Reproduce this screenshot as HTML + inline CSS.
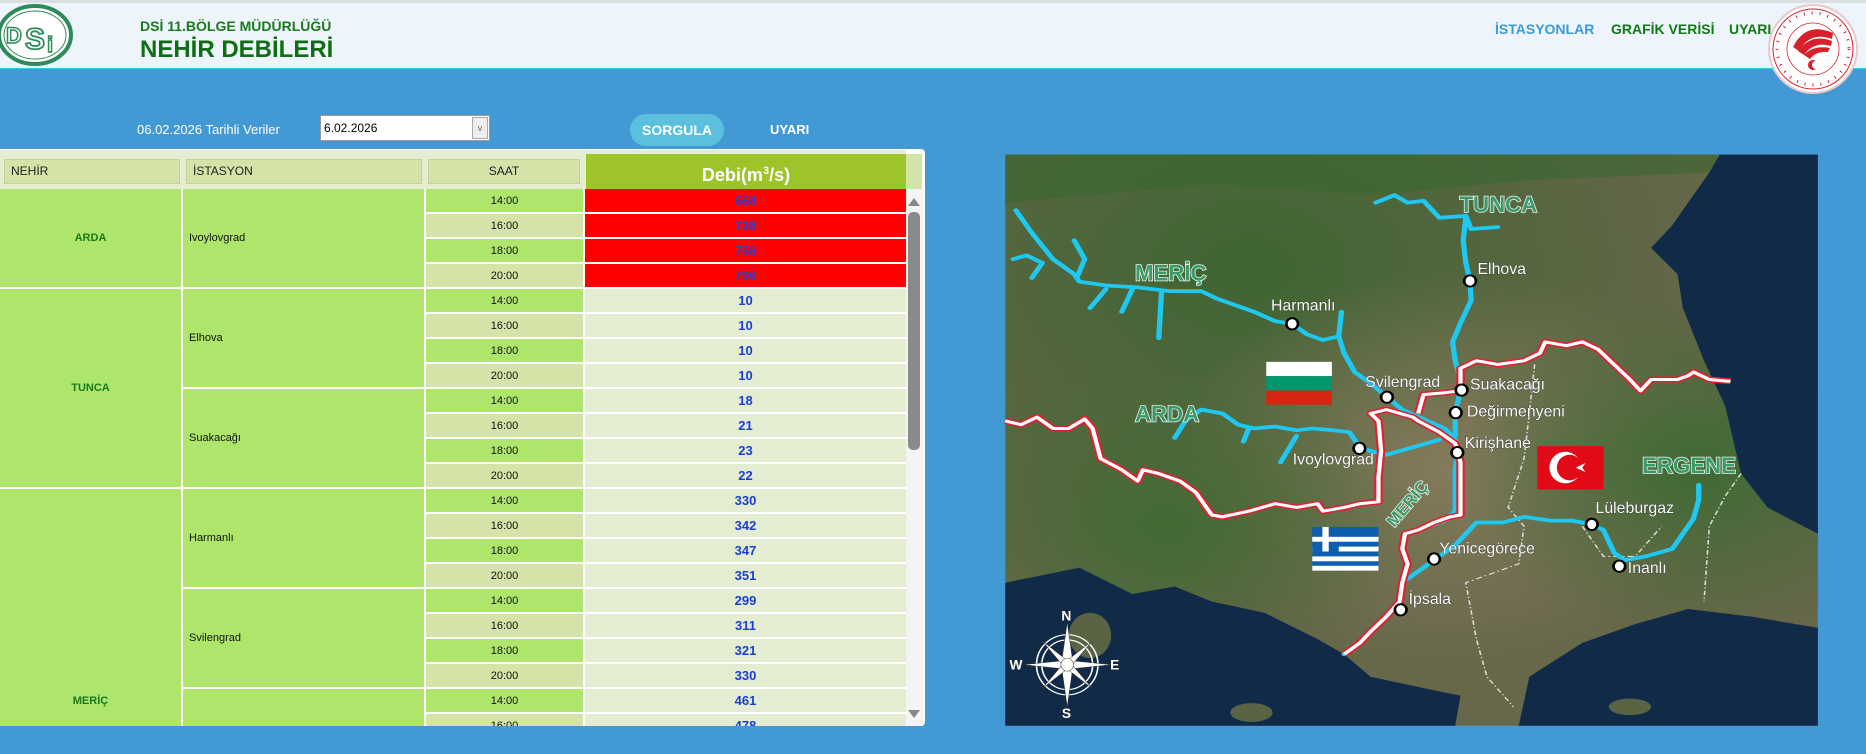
<!DOCTYPE html>
<html><head><meta charset="utf-8"><style>
*{margin:0;padding:0;box-sizing:border-box}
html,body{width:1866px;height:754px;overflow:hidden}
body{background:#4399d4;font-family:"Liberation Sans",sans-serif;position:relative}
.hdr{position:absolute;left:0;top:0;width:1866px;height:69px;background:#edf4fb;border-top:3px solid #dcdfe2;border-bottom:1px solid #3cc8e0}
.abs{position:absolute}
.t1{left:140px;top:18px;font-size:14px;font-weight:bold;color:#1a7a1a}
.t2{left:140px;top:36px;font-size:24px;font-weight:bold;color:#0f6e14}
.nav{top:21px;font-family:"Liberation Sans Narrow","Liberation Sans",sans-serif;font-size:14px;font-weight:bold}
.panel{left:0;top:149px;width:925px;height:577px;background:#fff;border-radius:0 4px 4px 0}
.hc{position:absolute;top:159px;height:25px;background:#d4e3a8;border:1px solid #c4d398;font-size:12px;line-height:23px;color:#222;padding-left:6px}
.grid{position:absolute;left:0;top:189px;width:906px;height:537px;overflow:hidden}
table{border-collapse:separate;border-spacing:0;table-layout:fixed;width:906px;font-family:"Liberation Sans Narrow","Liberation Sans",sans-serif}
td{height:25px;border-right:2px solid #fff;border-bottom:2px solid #fff;font-size:11px;padding:0}
td.n{background:#aee66c;color:#1a7a1a;font-weight:bold;text-align:center}
td.s{background:#aee66c;color:#111;padding-left:6px}
td.a{background:#aee66c;text-align:center;color:#111}
td.b{background:#d4e3a8;text-align:center;color:#111}
td.d{background:#e4edd2;text-align:center;color:#1a3fd0;font-weight:bold;font-size:13px;border-right:0}
td.r{background:#ff0000;text-align:center;color:#2a3fd0;font-weight:bold;font-size:13px;border-right:0}
</style></head><body>
<div class="hdr"></div>
<svg class="abs" style="left:0;top:3px" width="80" height="66" viewBox="0 3 80 66">
<ellipse cx="35" cy="35" rx="36" ry="29" fill="#fff" stroke="#2f8a5a" stroke-width="4"/>
<ellipse cx="35" cy="35" rx="31" ry="24" fill="none" stroke="#2f8a5a" stroke-width="1"/>
<text x="6" y="43" font-family="Liberation Sans" font-weight="bold" font-size="22" fill="#fff" stroke="#2f8a5a" stroke-width="1.5">D</text>
<text x="25" y="49" font-family="Liberation Sans" font-weight="bold" font-size="30" fill="#fff" stroke="#2f8a5a" stroke-width="1.8">S</text>
<text x="47" y="52" font-family="Liberation Sans" font-weight="bold" font-size="22" fill="#fff" stroke="#2f8a5a" stroke-width="1.5">i</text>
</svg>
<div class="abs t1">DSİ 11.BÖLGE MÜDÜRLÜĞÜ</div>
<div class="abs t2">NEHİR DEBİLERİ</div>
<div class="abs nav" style="left:1495px;color:#3a9ad9">İSTASYONLAR</div>
<div class="abs nav" style="left:1611px;color:#127a12">GRAFİK VERİSİ</div>
<div class="abs nav" style="left:1729px;color:#127a12">UYARI</div>
<svg class="abs" style="left:1766px;top:3px" width="94" height="92" viewBox="0 0 94 92">
<circle cx="47" cy="46" r="44" fill="#fff" stroke="#e8c8cc" stroke-width="2"/>
<circle cx="47" cy="46" r="40" fill="none" stroke="#d8202a" stroke-width="1"/>
<circle cx="47" cy="46" r="36" fill="none" stroke="#d8202a" stroke-width="3" stroke-dasharray="1 7"/>
<circle cx="47" cy="46" r="26" fill="none" stroke="#d8202a" stroke-width="0.8"/>
<path d="M27 44 Q40 18 67 30 L66 36 Q44 28 33 48 Z" fill="#d8202a"/>
<path d="M32 48 Q45 30 66 38 L65 43 Q48 38 38 52 Z" fill="#d8202a"/>
<path d="M38 52 Q47 42 64 45 L62 49 Q50 48 44 56 Z" fill="#d8202a"/>
<path d="M50 58 a5 5 0 1 0 0 8 a4 4 0 1 1 0 -8z" fill="#d8202a"/>
</svg>

<div class="abs" style="left:137px;top:122px;color:#fff;font-size:13px">06.02.2026 Tarihli Veriler</div>
<div class="abs" style="left:320px;top:115px;width:170px;height:26px;background:#fff;border:1px solid #999;font-size:12px;line-height:24px;padding-left:3px">6.02.2026<div class="abs" style="right:1px;top:1px;width:16px;height:22px;border:1px solid #aaa;background:#eee;font-size:9px;text-align:center;line-height:20px;color:#666">v</div></div>
<div class="abs" style="left:630px;top:114px;width:94px;height:32px;background:#5bc0de;border-radius:16px;color:#fff;font-weight:bold;font-size:14px;text-align:center;line-height:32px">SORGULA</div>
<div class="abs" style="left:770px;top:122px;color:#fff;font-weight:bold;font-size:13px">UYARI</div>

<div class="abs panel"></div>
<div class="abs" style="left:0;top:150px;width:906px;height:39px;background:#e4edd2"></div>
<div class="hc" style="left:4px;width:176px">NEHİR</div>
<div class="hc" style="left:186px;width:236px">İSTASYON</div>
<div class="hc" style="left:428px;width:152px;text-align:center;padding:0">SAAT</div>
<div class="abs" style="left:586px;top:154px;width:320px;height:35px;background:#9dc428;color:#fff;font-weight:bold;font-size:18px;text-align:center;line-height:34px">Debi(m<sup style="font-size:11px">3</sup>/s)</div>
<div class="abs" style="left:906px;top:154px;width:16px;height:35px;background:#d4e3a8"></div>
<div class="abs" style="left:906px;top:189px;width:17px;height:537px;background:#f4f4f4"></div>
<div class="abs" style="left:908px;top:212px;width:12px;height:238px;background:#8a8a8a;border-radius:5px"></div>
<div class="abs" style="left:908px;top:198px;width:0;height:0;border-left:6px solid transparent;border-right:6px solid transparent;border-bottom:8px solid #888"></div>
<div class="abs" style="left:908px;top:710px;width:0;height:0;border-left:6px solid transparent;border-right:6px solid transparent;border-top:8px solid #888"></div>

<div class="grid"><table>
<colgroup><col style="width:183px"><col style="width:243px"><col style="width:159px"><col style="width:321px"></colgroup>
<tr><td class="n" rowspan="4">ARDA</td><td class="s" rowspan="4">Ivoylovgrad</td><td class="a">14:00</td><td class="r">668</td></tr>
<tr><td class="b">16:00</td><td class="r">728</td></tr>
<tr><td class="a">18:00</td><td class="r">768</td></tr>
<tr><td class="b">20:00</td><td class="r">796</td></tr>
<tr><td class="n" rowspan="8">TUNCA</td><td class="s" rowspan="4">Elhova</td><td class="a">14:00</td><td class="d">10</td></tr>
<tr><td class="b">16:00</td><td class="d">10</td></tr>
<tr><td class="a">18:00</td><td class="d">10</td></tr>
<tr><td class="b">20:00</td><td class="d">10</td></tr>
<tr><td class="s" rowspan="4">Suakacağı</td><td class="a">14:00</td><td class="d">18</td></tr>
<tr><td class="b">16:00</td><td class="d">21</td></tr>
<tr><td class="a">18:00</td><td class="d">23</td></tr>
<tr><td class="b">20:00</td><td class="d">22</td></tr>
<tr><td class="n" rowspan="17">MERİÇ</td><td class="s" rowspan="4">Harmanlı</td><td class="a">14:00</td><td class="d">330</td></tr>
<tr><td class="b">16:00</td><td class="d">342</td></tr>
<tr><td class="a">18:00</td><td class="d">347</td></tr>
<tr><td class="b">20:00</td><td class="d">351</td></tr>
<tr><td class="s" rowspan="4">Svilengrad</td><td class="a">14:00</td><td class="d">299</td></tr>
<tr><td class="b">16:00</td><td class="d">311</td></tr>
<tr><td class="a">18:00</td><td class="d">321</td></tr>
<tr><td class="b">20:00</td><td class="d">330</td></tr>
<tr><td class="s" rowspan="4">Kirişhane</td><td class="a">14:00</td><td class="d">461</td></tr>
<tr><td class="b">16:00</td><td class="d">478</td></tr>
<tr><td class="a">18:00</td><td class="d">490</td></tr>
<tr><td class="b">20:00</td><td class="d">500</td></tr>
<tr><td class="s" rowspan="5">İpsala</td><td class="a">14:00</td><td class="d">520</td></tr>
<tr><td class="b">16:00</td><td class="d">530</td></tr>
<tr><td class="a">18:00</td><td class="d">540</td></tr>
<tr><td class="b">20:00</td><td class="d">550</td></tr>
<tr><td class="a">22:00</td><td class="d">560</td></tr>
</table></div>

<svg class="abs" style="left:1000px;top:150px" width="830" height="590" viewBox="0 0 1568 1568" preserveAspectRatio="none">
<defs>
<radialGradient id="g1" cx="0.3" cy="0.2" r="0.6"><stop offset="0" stop-color="#3f6532"/><stop offset="1" stop-color="#3f6532" stop-opacity="0"/></radialGradient>
<radialGradient id="g2" cx="0.55" cy="0.55" r="0.35"><stop offset="0" stop-color="#857a5c"/><stop offset="1" stop-color="#857a5c" stop-opacity="0"/></radialGradient>
<radialGradient id="g3" cx="0.85" cy="0.55" r="0.3"><stop offset="0" stop-color="#3f6a34"/><stop offset="1" stop-color="#3f6a34" stop-opacity="0"/></radialGradient>
<radialGradient id="g4" cx="0.2" cy="0.65" r="0.3"><stop offset="0" stop-color="#436a34"/><stop offset="1" stop-color="#436a34" stop-opacity="0"/></radialGradient>
</defs>
<rect x="10" y="12" width="1535" height="1518" fill="#67674a"/>
<rect x="10" y="12" width="1535" height="1518" fill="url(#g1)"/>
<rect x="10" y="12" width="1535" height="1518" fill="url(#g2)"/>
<rect x="10" y="12" width="1535" height="1518" fill="url(#g3)"/>
<rect x="10" y="12" width="1535" height="1518" fill="url(#g4)"/>
<path d="M10 12 L1360 12 L1340 60 L1000 80 L700 120 L400 90 L10 140 Z" fill="#3a6530" opacity="0.6"/>
<path d="M1360 12 L1545 12 L1545 1020 L1450 950 L1400 860 L1370 680 L1330 560 L1290 420 L1280 330 L1230 260 L1270 200 L1300 140 L1340 60 Z" fill="#112a48"/>
<path d="M10 1150 L80 1130 L150 1110 L250 1180 L330 1160 L400 1200 L500 1230 L600 1300 L650 1340 L700 1400 L800 1430 L870 1450 L860 1530 L10 1530 Z" fill="#112a48"/>
<path d="M980 1530 L1000 1400 L1100 1310 L1200 1260 L1300 1220 L1420 1240 L1545 1270 L1545 1530 Z" fill="#112a48"/>
<ellipse cx="170" cy="1290" rx="40" ry="60" fill="#5a6445"/>
<ellipse cx="475" cy="1495" rx="40" ry="25" fill="#5a6445"/>
<ellipse cx="1190" cy="1480" rx="40" ry="22" fill="#5a6445"/>
<path d="M1010 570 L1000 700 L990 820 L960 950 L990 1000 L980 1100 L880 1150 L900 1300 L920 1400 L970 1480" fill="none" stroke="#ddd" stroke-width="3" stroke-dasharray="12 6 3 6"/>
<path d="M1400 860 L1370 920 L1340 1000 L1330 1200 M1100 1000 L1140 1080 L1200 1080 L1250 1000" fill="none" stroke="#ddd" stroke-width="3" stroke-dasharray="12 6 3 6"/>
<g fill="none" stroke="#1ec8f0" stroke-width="10" stroke-linejoin="round" stroke-linecap="round">
<path d="M30 160 L60 220 L100 290 L140 330 L150 350 L200 360 L260 365 L320 375 L380 375 L410 395 L440 410 L480 430 L520 455 L552 462 L580 490 L610 505 L640 495 L650 540 L670 590 L700 620 L730 655 L760 690 L800 715 L840 740 L860 770 L865 800 L860 850 L860 960 L840 985 L790 1010 L765 1020 L760 1060 L770 1100 L760 1150 L755 1200 L730 1240 L700 1280 L680 1310 L650 1340"/>
<path d="M640 495 L645 430 M25 290 L50 280 L80 300 L60 340 M140 240 L160 290 L145 340 M170 420 L200 370 M230 430 L250 370 M300 500 L305 380"/>
<path d="M710 140 L745 120 L770 140 L800 135 L830 180 L880 175 L890 210 L940 205 M880 180 L875 240 L880 300 L888 348 L890 400 L870 460 L855 510 L860 560 L868 600 L870 640 L860 700 L860 760"/>
<path d="M330 765 L350 720 L380 690 L420 700 L450 730 L480 740 L520 735 L560 745 L590 740 L630 745 L660 750 L680 790 L700 800 L730 810 L780 790 L830 770 M460 775 L470 740 M530 830 L560 760"/>
<path d="M770 1140 L820 1090 L860 1050 L880 1020 L900 990 L950 990 L990 975 L1040 985 L1080 985 L1118 995 L1140 1010 L1160 1070 L1180 1090 L1220 1080 L1270 1060 L1310 980 L1320 930 L1320 890"/>
</g>
<g fill="none" stroke-linejoin="round">
<path d="M10 720 L40 730 L70 710 L100 740 L130 740 L160 715 L175 740 L190 820 L230 850 L260 880 L270 850 L300 860 L340 880 L370 910 L400 970 L420 975 L470 960 L520 940 L560 950 L600 940 L610 960 L650 950 L680 940 L715 935 L715 870 L720 800 L715 720 L700 700 L730 690 L780 710 L790 720 L830 750 L860 780 L870 830 L870 970 L850 975 L820 990 L790 1010 L765 1020 L760 1060 L770 1100 L760 1150 L755 1200 L730 1240 L700 1280 L680 1310 L650 1340 M790 700 L800 650 L840 645 L870 640 L870 580 L900 560 L940 570 L990 560 L1020 540 L1030 510 L1070 520 L1100 510 L1130 530 L1160 570 L1190 610 L1210 640 L1230 610 L1280 610 L1300 600 L1310 590 L1340 610 L1380 615" stroke="#e02030" stroke-width="16"/>
<path d="M10 720 L40 730 L70 710 L100 740 L130 740 L160 715 L175 740 L190 820 L230 850 L260 880 L270 850 L300 860 L340 880 L370 910 L400 970 L420 975 L470 960 L520 940 L560 950 L600 940 L610 960 L650 950 L680 940 L715 935 L715 870 L720 800 L715 720 L700 700 L730 690 L780 710 L790 720 L830 750 L860 780 L870 830 L870 970 L850 975 L820 990 L790 1010 L765 1020 L760 1060 L770 1100 L760 1150 L755 1200 L730 1240 L700 1280 L680 1310 L650 1340 M790 700 L800 650 L840 645 L870 640 L870 580 L900 560 L940 570 L990 560 L1020 540 L1030 510 L1070 520 L1100 510 L1130 530 L1160 570 L1190 610 L1210 640 L1230 610 L1280 610 L1300 600 L1310 590 L1340 610 L1380 615" stroke="#fff" stroke-width="8"/>
</g>
<g fill="#fff" stroke="#000" stroke-width="5">
<ellipse cx="888" cy="348" rx="11" ry="15"/><ellipse cx="552" cy="462" rx="11" ry="15"/><ellipse cx="731" cy="657" rx="11" ry="15"/><ellipse cx="872" cy="638" rx="11" ry="15"/><ellipse cx="861" cy="698" rx="11" ry="15"/><ellipse cx="864" cy="804" rx="11" ry="15"/><ellipse cx="679" cy="793" rx="11" ry="15"/><ellipse cx="1118" cy="995" rx="11" ry="15"/><ellipse cx="820" cy="1087" rx="11" ry="15"/><ellipse cx="757" cy="1222" rx="11" ry="15"/><ellipse cx="1170" cy="1106" rx="11" ry="15"/>
</g>
<g font-family="Liberation Sans" font-size="30" fill="#fff" stroke="#222" stroke-width="1" paint-order="stroke">
<text transform="translate(902,330) scale(1,1.4)">Elhova</text>
<text transform="translate(512,427) scale(1,1.4)">Harmanlı</text>
<text transform="translate(690,630) scale(1,1.4)">Svilengrad</text>
<text transform="translate(888,636) scale(1,1.4)">Suakacağı</text>
<text transform="translate(882,708) scale(1,1.4)">Değirmenyeni</text>
<text transform="translate(878,792) scale(1,1.4)">Kirişhane</text>
<text transform="translate(553,836) scale(1,1.4)">Ivoylovgrad</text>
<text transform="translate(1125,965) scale(1,1.4)">Lüleburgaz</text>
<text transform="translate(830,1073) scale(1,1.4)">Yenicegörece</text>
<text transform="translate(772,1206) scale(1,1.4)">İpsala</text>
<text transform="translate(1186,1124) scale(1,1.4)">İnanlı</text>
</g>
<g font-family="Liberation Sans" font-weight="bold" font-size="42" fill="#3a9a6a" stroke="#e8f0e8" stroke-width="3" paint-order="stroke">
<text transform="translate(255,347) scale(1,1.4)">MERİÇ</text>
<text transform="translate(868,165) scale(1,1.4)">TUNCA</text>
<text transform="translate(255,722) scale(1,1.4)">ARDA</text>
<text transform="translate(1213,858) scale(1,1.4)">ERGENE</text>
<text transform="translate(745,1005) scale(1,1.4) rotate(-50)" font-size="32">MERİÇ</text>
</g>
<rect x="503" y="563" width="124" height="38" fill="#fff"/><rect x="503" y="601" width="124" height="38" fill="#00966e"/><rect x="503" y="639" width="124" height="38" fill="#d62612"/>
<rect x="1015" y="787" width="125" height="115" fill="#e30a17"/>
<ellipse cx="1068" cy="844" rx="30" ry="42" fill="#fff"/><ellipse cx="1076" cy="844" rx="24" ry="34" fill="#e30a17"/>
<polygon points="1088,844 1106,832 1100,844 1106,856" fill="#fff"/>
<rect x="590" y="1002" width="125" height="116" fill="#0d5eaf"/>
<g fill="#fff"><rect x="590" y="1028" width="125" height="13"/><rect x="590" y="1054" width="125" height="13"/><rect x="590" y="1080" width="125" height="13"/><rect x="590" y="1105" width="125" height="13"/><rect x="590" y="1002" width="50" height="65" fill="#0d5eaf"/><rect x="590" y="1028" width="50" height="13"/><rect x="609" y="1002" width="12" height="65"/></g>
<g stroke="#fff" fill="none" stroke-width="3">
<ellipse cx="127" cy="1368" rx="58" ry="80"/><ellipse cx="127" cy="1368" rx="48" ry="66"/>
</g>
<g fill="#fff" stroke="#333" stroke-width="1">
<polygon points="127,1255 137,1355 127,1368 117,1355"/><polygon points="127,1480 137,1381 127,1368 117,1381"/>
<polygon points="45,1368 115,1358 127,1368 115,1378"/><polygon points="210,1368 139,1358 127,1368 139,1378"/>
<polygon points="80,1305 130,1360 120,1372"/><polygon points="174,1305 124,1360 134,1372"/><polygon points="80,1431 130,1376 120,1364"/><polygon points="174,1431 124,1376 134,1364"/>
<ellipse cx="127" cy="1368" rx="12" ry="17"/>
</g>
<g font-family="Liberation Sans" font-weight="bold" font-size="26" fill="#fff" stroke="#222" stroke-width="1" paint-order="stroke">
<text transform="translate(116,1250) scale(1,1.4)">N</text><text transform="translate(117,1510) scale(1,1.4)">S</text>
<text transform="translate(18,1380) scale(1,1.4)">W</text><text transform="translate(208,1380) scale(1,1.4)">E</text>
</g>
</svg>
</body></html>
